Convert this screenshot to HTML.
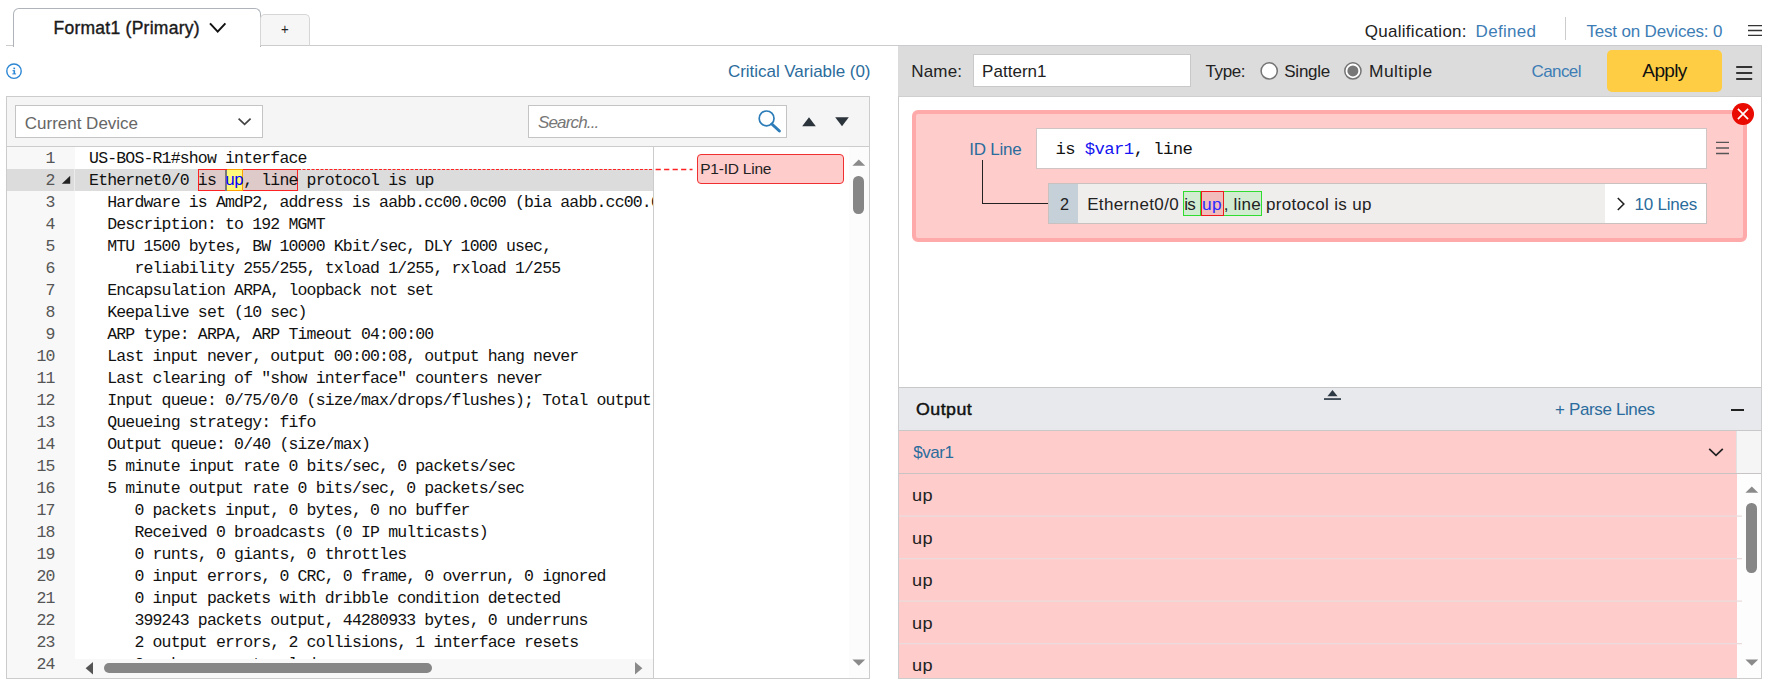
<!DOCTYPE html>
<html lang="en">
<head>
<meta charset="utf-8">
<title>Parser Pattern Editor</title>
<style>
html,body{margin:0;padding:0;background:#fff;}
body{width:1766px;height:679px;position:relative;overflow:hidden;font-family:"Liberation Sans",sans-serif;color:#222;}
.a{position:absolute;box-sizing:border-box;}
.t{position:absolute;white-space:pre;line-height:1;font-family:"Liberation Sans",sans-serif;}
.m{font-family:"Liberation Mono",monospace;}
/* code viewer */
#code{left:7px;top:147px;width:646px;height:531px;overflow:hidden;background:#fff;}
#gutter{left:7px;top:147px;width:68px;height:531px;background:#f8f8f8;}
.ln{position:absolute;left:7px;width:47.6px;height:22px;line-height:22px;text-align:right;font-family:"Liberation Mono",monospace;font-size:16.5px;letter-spacing:-0.83px;color:#555;padding-top:0px;box-sizing:border-box;}
.cl{position:absolute;left:89.1px;height:22px;line-height:22px;white-space:pre;font-family:"Liberation Mono",monospace;font-size:16.5px;letter-spacing:-0.84px;color:#111;padding-top:0px;box-sizing:border-box;}
</style>
</head>
<body>

<!-- ===== top tab strip ===== -->
<div class="a" style="left:6px;top:45px;width:1756px;height:1px;background:#ccc;"></div>
<div class="a" style="left:13px;top:8px;width:248px;height:39px;border:1px solid #aeb4ba;border-bottom:none;border-radius:6px 6px 0 0;background:#fff;"></div>
<div class="a" style="left:260px;top:14px;width:50px;height:32px;border:1px solid #d6d6d6;border-bottom:1px solid #ccc;border-radius:5px 5px 0 0;background:#f6f6f6;"></div>
<svg class="a" style="left:207.3px;top:20px;" width="22" height="16" viewBox="0 0 22 16"><path d="M3 3.4 L10.7 11.6 L18.4 3.4" fill="none" stroke="#111" stroke-width="2"/></svg>

<!-- separator + hamburger (top right) -->
<div class="a" style="left:1565px;top:17px;width:1px;height:23px;background:#ccc;"></div>
<svg class="a" style="left:1746px;top:20px;" width="18" height="20" viewBox="0 0 18 20"><path d="M2 5.6 H16 M2 10.5 H16 M2 15.4 H16" stroke="#333" stroke-width="1.4"/></svg>

<!-- ===== left panel ===== -->
<svg class="a" style="left:5px;top:62px;" width="18" height="18" viewBox="0 0 18 18">
  <circle cx="9" cy="9.2" r="7.2" fill="#fff" stroke="#2b86d4" stroke-width="1.4"/>
  <rect x="8.5" y="8.2" width="1.6" height="3.8" fill="#2b86d4"/>
  <rect x="7.5" y="8.2" width="1.6" height="1" fill="#2b86d4"/>
  <rect x="7.3" y="11.4" width="3.8" height="1" fill="#2b86d4"/>
  <rect x="8.4" y="5.6" width="1.7" height="1.6" fill="#2b86d4"/>
</svg>

<div class="a" style="left:6px;top:96px;width:864px;height:583px;border:1px solid #ccc;background:#f5f5f5;"></div>
<!-- dropdown -->
<div class="a" style="left:15px;top:105px;width:248px;height:33px;border:1px solid #c4c4c4;background:#fff;"></div>
<svg class="a" style="left:234.9px;top:115px;" width="18" height="14" viewBox="0 0 18 14"><path d="M3.6 3.6 L9.6 9.4 L15.6 3.6" fill="none" stroke="#444" stroke-width="1.7"/></svg>
<!-- search -->
<div class="a" style="left:528px;top:105px;width:259px;height:33px;border:1px solid #c4c4c4;background:#fff;"></div>
<svg class="a" style="left:756px;top:108px;" width="28" height="26" viewBox="0 0 28 26">
  <circle cx="10.6" cy="10.4" r="7.4" fill="none" stroke="#2b7cb8" stroke-width="1.7"/>
  <path d="M15.8 16 L23.4 23" stroke="#2b7cb8" stroke-width="3" stroke-linecap="round"/>
</svg>
<svg class="a" style="left:800.6px;top:116px;" width="16" height="12" viewBox="0 0 16 12"><path d="M1.2 10.3 L8 1.2 L14.8 10.3 Z" fill="#2b333b"/></svg>
<svg class="a" style="left:833.5px;top:116px;" width="16" height="12" viewBox="0 0 16 12"><path d="M1.2 1.2 L14.8 1.2 L8 10.3 Z" fill="#2b333b"/></svg>

<!-- code area -->
<div class="a" style="left:7px;top:146px;width:862px;height:1px;background:#ccc;"></div>
<div class="a" id="code"></div>
<div class="a" id="gutter"></div>
<div class="a" style="left:7px;top:169px;width:646px;height:22px;background:#dcdcdc;"></div>
<div class="a" style="left:74px;top:169px;width:1px;height:22px;background:#ececec;"></div>
<div class="a" style="left:0;top:0;width:75px;height:678px;overflow:hidden;transform:translateY(0.6px);">
<div class="ln" style="top:147px">1</div>
<div class="ln" style="top:169px">2</div>
<div class="ln" style="top:191px">3</div>
<div class="ln" style="top:213px">4</div>
<div class="ln" style="top:235px">5</div>
<div class="ln" style="top:257px">6</div>
<div class="ln" style="top:279px">7</div>
<div class="ln" style="top:301px">8</div>
<div class="ln" style="top:323px">9</div>
<div class="ln" style="top:345px">10</div>
<div class="ln" style="top:367px">11</div>
<div class="ln" style="top:389px">12</div>
<div class="ln" style="top:411px">13</div>
<div class="ln" style="top:433px">14</div>
<div class="ln" style="top:455px">15</div>
<div class="ln" style="top:477px">16</div>
<div class="ln" style="top:499px">17</div>
<div class="ln" style="top:521px">18</div>
<div class="ln" style="top:543px">19</div>
<div class="ln" style="top:565px">20</div>
<div class="ln" style="top:587px">21</div>
<div class="ln" style="top:609px">22</div>
<div class="ln" style="top:631px">23</div>
<div class="ln" style="top:653px">24</div>
</div>
<div class="a" style="left:0;top:0;width:653px;height:659px;overflow:hidden;">
<!-- row 2 selection boxes -->
<div class="a" style="left:198px;top:169px;width:29px;height:22px;border:1px solid #f22;border-right:none;background:#dfcaca;"></div>
<div class="a" style="left:225.3px;top:169.5px;width:1.6px;height:21px;background:#777;"></div>
<div class="a" style="left:226.8px;top:169px;width:16.4px;height:22px;border:1px solid #ffa000;border-left:none;background:#fff87a;"></div>
<div class="a" style="left:243.2px;top:169px;width:54.8px;height:22px;border:1px solid #f22;border-left:none;background:#dfcaca;"></div>
<svg class="a" style="left:61px;top:175px;" width="11" height="10" viewBox="0 0 11 10"><path d="M9.2 0.8 L9.2 8.7 L0.8 8.7 Z" fill="#222"/></svg>
<div class="a" style="left:0;top:0;width:653px;height:700px;transform:translateY(0.6px);">
<div class="cl" style="top:147px">US-BOS-R1#show interface</div>
<div class="cl" style="top:169px">Ethernet0/0 is <span style="color:#00f">up</span>, line protocol is up</div>
<div class="cl" style="top:191px">  Hardware is AmdP2, address is aabb.cc00.0c00 (bia aabb.cc00.0c00)</div>
<div class="cl" style="top:213px">  Description: to 192 MGMT</div>
<div class="cl" style="top:235px">  MTU 1500 bytes, BW 10000 Kbit/sec, DLY 1000 usec,</div>
<div class="cl" style="top:257px">     reliability 255/255, txload 1/255, rxload 1/255</div>
<div class="cl" style="top:279px">  Encapsulation ARPA, loopback not set</div>
<div class="cl" style="top:301px">  Keepalive set (10 sec)</div>
<div class="cl" style="top:323px">  ARP type: ARPA, ARP Timeout 04:00:00</div>
<div class="cl" style="top:345px">  Last input never, output 00:00:08, output hang never</div>
<div class="cl" style="top:367px">  Last clearing of &quot;show interface&quot; counters never</div>
<div class="cl" style="top:389px">  Input queue: 0/75/0/0 (size/max/drops/flushes); Total output drops: 0</div>
<div class="cl" style="top:411px">  Queueing strategy: fifo</div>
<div class="cl" style="top:433px">  Output queue: 0/40 (size/max)</div>
<div class="cl" style="top:455px">  5 minute input rate 0 bits/sec, 0 packets/sec</div>
<div class="cl" style="top:477px">  5 minute output rate 0 bits/sec, 0 packets/sec</div>
<div class="cl" style="top:499px">     0 packets input, 0 bytes, 0 no buffer</div>
<div class="cl" style="top:521px">     Received 0 broadcasts (0 IP multicasts)</div>
<div class="cl" style="top:543px">     0 runts, 0 giants, 0 throttles</div>
<div class="cl" style="top:565px">     0 input errors, 0 CRC, 0 frame, 0 overrun, 0 ignored</div>
<div class="cl" style="top:587px">     0 input packets with dribble condition detected</div>
<div class="cl" style="top:609px">     399243 packets output, 44280933 bytes, 0 underruns</div>
<div class="cl" style="top:631px">     2 output errors, 2 collisions, 1 interface resets</div>
<div class="cl" style="top:653px">     0 unknown protocol drops</div>
</div>
</div>
<!-- h scrollbar -->
<div class="a" style="left:75px;top:659px;width:578px;height:19px;background:#f8f8f8;"></div>
<svg class="a" style="left:84px;top:661px;" width="10" height="14" viewBox="0 0 10 14"><path d="M9 1 L9 13.4 L1.6 7.2 Z" fill="#555"/></svg>
<svg class="a" style="left:634px;top:661px;" width="10" height="14" viewBox="0 0 10 14"><path d="M1 1 L1 13.4 L8.4 7.2 Z" fill="#8a8a8a"/></svg>
<div class="a" style="left:103.7px;top:662.7px;width:328.6px;height:10.8px;border-radius:5.4px;background:#868686;"></div>

<!-- annotation column -->
<div class="a" style="left:653px;top:147px;width:1px;height:531px;background:#ccc;"></div>
<div class="a" style="left:654px;top:147px;width:195px;height:531px;background:#fff;"></div>
<div class="a" style="left:849px;top:147px;width:20px;height:531px;background:#fcfcfc;"></div>
<!-- dashed leader -->
<svg class="a" style="left:298px;top:168px;" width="400" height="3" viewBox="0 0 400 3">
  <path d="M0 1.5 H355" stroke="#f22" stroke-width="1" stroke-dasharray="3 1.5"/>
  <path d="M357.6 1.5 H394.5" stroke="#f22" stroke-width="1.5" stroke-dasharray="5.2 3.3"/>
</svg>
<div class="a" style="left:696.5px;top:154px;width:147px;height:29.5px;border:1.3px solid #f03030;border-radius:4px;background:#ffcccc;"></div>
<!-- v scrollbar left panel -->
<svg class="a" style="left:852px;top:158px;" width="14" height="9" viewBox="0 0 14 9"><path d="M0.4 7.8 L6.8 1.4 L13.2 7.8 Z" fill="#8a8a8a"/></svg>
<div class="a" style="left:853.2px;top:176px;width:11px;height:38px;border-radius:5.2px;background:#868686;"></div>
<svg class="a" style="left:852.3px;top:657.8px;" width="14" height="9" viewBox="0 0 14 9"><path d="M0.4 1.4 L13.2 1.4 L6.8 7.8 Z" fill="#8a8a8a"/></svg>

<!-- ===== right panel ===== -->
<div class="a" style="left:898px;top:45px;width:864px;height:634px;border:1px solid #ccc;border-top:none;background:#fff;"></div>
<div class="a" style="left:898px;top:45px;width:863px;height:52px;background:#dcdcdc;border-top:1px solid #c9cbd0;border-bottom:1px solid #cfcfcf;"></div>
<!-- name input -->
<div class="a" style="left:973px;top:54px;width:218px;height:33px;border:1px solid #c9c9c9;background:#fff;"></div>
<!-- radios -->
<svg class="a" style="left:1258px;top:60px;" width="22" height="22" viewBox="0 0 22 22"><circle cx="11.2" cy="10.9" r="8.1" fill="#fff" stroke="#747474" stroke-width="1.5"/></svg>
<svg class="a" style="left:1342px;top:60px;" width="22" height="22" viewBox="0 0 22 22"><circle cx="10.9" cy="10.9" r="8.1" fill="#fff" stroke="#747474" stroke-width="1.5"/><circle cx="10.9" cy="10.9" r="5.5" fill="#777"/></svg>
<!-- apply -->
<div class="a" style="left:1607px;top:50px;width:115px;height:42px;border-radius:5px;background:#ffcd43;"></div>
<svg class="a" style="left:1734px;top:62px;" width="20" height="22" viewBox="0 0 20 22"><path d="M2.2 5 H18.2 M2.2 11 H18.2 M2.2 16.9 H18.2" stroke="#333" stroke-width="2"/></svg>

<!-- pink pattern block -->
<div class="a" style="left:912px;top:110px;width:835px;height:132px;border:4px solid #ffaaaa;border-radius:6px;background:#ffcccc;"></div>
<div class="a" style="left:1036px;top:128px;width:671px;height:41px;border:1px solid #d0c4c4;background:#fff;"></div>
<svg class="a" style="left:1714px;top:138px;" width="18" height="20" viewBox="0 0 18 20"><path d="M2 4.4 H15 M2 10 H15 M2 15.5 H15" stroke="#555" stroke-width="1.4"/></svg>
<!-- connector -->
<div class="a" style="left:981.7px;top:160px;width:1.3px;height:44px;background:#222;"></div>
<div class="a" style="left:981.7px;top:202.7px;width:67px;height:1.3px;background:#222;"></div>
<!-- sample row -->
<div class="a" style="left:1048px;top:183px;width:659px;height:41px;border:1px solid #c9c0c0;background:#f0eded;"></div>
<div class="a" style="left:1049px;top:184px;width:29px;height:39px;background:#c5d0d9;"></div>
<div class="a" style="left:1605px;top:184px;width:101px;height:39px;background:#fff;"></div>
<div class="a" style="left:1182.5px;top:191.2px;width:18.5px;height:24.4px;border:1px solid #2fdc2f;background:#d2ecd2;"></div>
<div class="a" style="left:1223px;top:191.2px;width:38.5px;height:24.4px;border:1px solid #2fdc2f;background:#d2ecd2;"></div>
<div class="a" style="left:1200.9px;top:191.2px;width:23px;height:24.4px;border:1.2px solid #ee1c1c;background:#f2bcbc;"></div>
<svg class="a" style="left:1614px;top:195px;" width="14" height="18" viewBox="0 0 14 18"><path d="M3.8 3 L9.8 9 L3.8 15" fill="none" stroke="#222" stroke-width="1.6"/></svg>
<!-- red close -->
<svg class="a" style="left:1731px;top:102px;" width="24" height="24" viewBox="0 0 24 24">
  <circle cx="12" cy="12" r="11" fill="#e90a00"/>
  <path d="M6.9 6.9 L17.1 17.1 M17.1 6.9 L6.9 17.1" stroke="#fff" stroke-width="1.7"/>
</svg>

<!-- ===== output ===== -->
<div class="a" style="left:899px;top:387px;width:862px;height:44px;border-top:1px solid #c8c8c8;border-bottom:1px solid #c8c8c8;background:#e8e9ed;"></div>
<svg class="a" style="left:1323px;top:388px;" width="20" height="13" viewBox="0 0 20 13">
  <path d="M4.4 8.2 L9.5 2 L14.6 8.2 Z" fill="#2d3a45"/>
  <rect x="1" y="10.2" width="17" height="1.7" fill="#2d3a45"/>
</svg>
<div class="a" style="left:1731.4px;top:409px;width:12.4px;height:2px;background:#222;"></div>
<!-- rows -->
<div class="a" style="left:899px;top:431px;width:838px;height:247px;background:#ffcccc;"></div>
<div class="a" style="left:1736px;top:431px;width:25px;height:42px;background:#f5f5f5;border-left:1px solid #e2e2e2;"></div>
<div class="a" style="left:1737px;top:474px;width:24px;height:204px;background:#fdfdfd;"></div>
<div class="a" style="left:899px;top:473px;width:862px;height:1px;background:#c9c4c4;"></div>
<svg class="a" style="left:899px;top:500px;" width="843" height="179" viewBox="0 0 843 179"><path d="M0 16.2 H843 M0 58.7 H843 M0 101.2 H843 M0 143.7 H843" stroke="#eadcdc" stroke-width="1.2"/></svg>
<svg class="a" style="left:1707px;top:446px;" width="18" height="12" viewBox="0 0 18 12"><path d="M2.2 2.8 L9 9.4 L15.8 2.8" fill="none" stroke="#222" stroke-width="1.7"/></svg>
<!-- v scrollbar output -->
<svg class="a" style="left:1745px;top:485px;" width="14" height="9" viewBox="0 0 14 9"><path d="M0.4 7.8 L6.8 1.4 L13.2 7.8 Z" fill="#8a8a8a"/></svg>
<div class="a" style="left:1746.2px;top:503px;width:11px;height:70px;border-radius:5.2px;background:#868686;"></div>
<svg class="a" style="left:1745px;top:657.8px;" width="14" height="9" viewBox="0 0 14 9"><path d="M0.4 1.4 L13.2 1.4 L6.8 7.8 Z" fill="#8a8a8a"/></svg>

<!-- ===== text layer ===== -->
<span class="t" style="left:53.45px;top:19.69px;font-size:17.5px;letter-spacing:0.267px;color:#1a1a1a;-webkit-text-stroke:0.4px #1a1a1a">Format1 (Primary)</span>
<span class="t" style="left:281.25px;top:21.30px;font-size:15px;letter-spacing:0.000px;transform:scaleX(0.8778);transform-origin:0 0;color:#222">+</span>
<span class="t" style="left:1364.85px;top:22.71px;font-size:17px;letter-spacing:0.265px;color:#222">Qualification:</span>
<span class="t" style="left:1475.55px;top:22.71px;font-size:17px;letter-spacing:0.310px;color:#3d7db5">Defined</span>
<span class="t" style="left:1586.45px;top:22.71px;font-size:17px;letter-spacing:-0.173px;color:#3d7db5">Test on Devices: 0</span>
<span class="t" style="left:728.00px;top:62.61px;font-size:17px;letter-spacing:-0.038px;color:#2b6c9c">Critical Variable (0)</span>
<span class="t" style="left:24.75px;top:114.91px;font-size:17px;letter-spacing:-0.005px;color:#666">Current Device</span>
<span class="t" style="left:538.00px;top:113.61px;font-size:17px;letter-spacing:-0.839px;color:#777;font-style:italic">Search...</span>
<span class="t" style="left:700.25px;top:160.63px;font-size:15.5px;letter-spacing:-0.223px;color:#222">P1-ID Line</span>
<span class="t" style="left:911.25px;top:62.91px;font-size:17px;letter-spacing:0.188px;color:#222">Name:</span>
<span class="t" style="left:982.00px;top:62.91px;font-size:17px;letter-spacing:0.041px;color:#222">Pattern1</span>
<span class="t" style="left:1205.50px;top:62.91px;font-size:17px;letter-spacing:-0.376px;color:#222">Type:</span>
<span class="t" style="left:1284.25px;top:62.91px;font-size:17px;letter-spacing:-0.240px;color:#222">Single</span>
<span class="t" style="left:1368.63px;top:62.91px;font-size:17px;letter-spacing:0.450px;transform:scaleX(1.0220);transform-origin:0 0;color:#222">Multiple</span>
<span class="t" style="left:1531.45px;top:62.91px;font-size:17px;letter-spacing:-0.568px;color:#3d7db5">Cancel</span>
<span class="t" style="left:1642.35px;top:61.12px;font-size:19px;letter-spacing:-0.632px;color:#111">Apply</span>
<span class="t" style="left:969.25px;top:141.31px;font-size:17px;letter-spacing:-0.218px;color:#2b6c9c">ID Line</span>
<span class="t" style="left:1059.75px;top:195.61px;font-size:17px;letter-spacing:0.000px;transform:scaleX(0.9556);transform-origin:0 0;color:#222">2</span>
<span class="t" style="left:1634.55px;top:195.61px;font-size:17px;letter-spacing:-0.239px;color:#2b6c9c">10 Lines</span>
<span class="t" style="left:915.85px;top:400.61px;font-size:17px;letter-spacing:0.450px;transform:scaleX(1.0456);transform-origin:0 0;color:#111;-webkit-text-stroke:0.45px #111">Output</span>
<span class="t" style="left:1555.05px;top:400.61px;font-size:17px;letter-spacing:-0.369px;color:#2b6c9c">+ Parse Lines</span>
<span class="t" style="left:913.25px;top:443.91px;font-size:17px;letter-spacing:-0.430px;color:#2b6c9c">$var1</span>
<span class="t" style="left:1087.15px;top:195.61px;font-size:17px;letter-spacing:0.366px;color:#222">Ethernet0/0</span>
<span class="t" style="left:1184.35px;top:195.61px;font-size:17px;letter-spacing:-0.977px;color:#222">is</span>
<span class="t" style="left:1202.23px;top:195.61px;font-size:17px;letter-spacing:0.450px;transform:scaleX(1.0165);transform-origin:0 0;color:#2a2aff">up</span>
<span class="t" style="left:1223.75px;top:195.61px;font-size:17px;letter-spacing:0.209px;color:#222">, line</span>
<span class="t" style="left:1265.95px;top:195.61px;font-size:17px;letter-spacing:0.334px;color:#222">protocol is up</span>
<span class="t" style="left:912.18px;top:487.11px;font-size:17px;letter-spacing:0.450px;transform:scaleX(1.0668);transform-origin:0 0;color:#222">up</span>
<span class="t" style="left:912.18px;top:529.61px;font-size:17px;letter-spacing:0.450px;transform:scaleX(1.0668);transform-origin:0 0;color:#222">up</span>
<span class="t" style="left:912.18px;top:572.11px;font-size:17px;letter-spacing:0.450px;transform:scaleX(1.0668);transform-origin:0 0;color:#222">up</span>
<span class="t" style="left:912.18px;top:614.61px;font-size:17px;letter-spacing:0.450px;transform:scaleX(1.0668);transform-origin:0 0;color:#222">up</span>
<span class="t" style="left:912.18px;top:657.11px;font-size:17px;letter-spacing:0.450px;transform:scaleX(1.0668);transform-origin:0 0;color:#222">up</span>
<span class="t m" style="left:1055.4px;top:141.4px;font-size:17.3px;letter-spacing:-0.59px;color:#111;">is <span style="color:#1414f0">$var1</span>, line</span>

</body>
</html>
